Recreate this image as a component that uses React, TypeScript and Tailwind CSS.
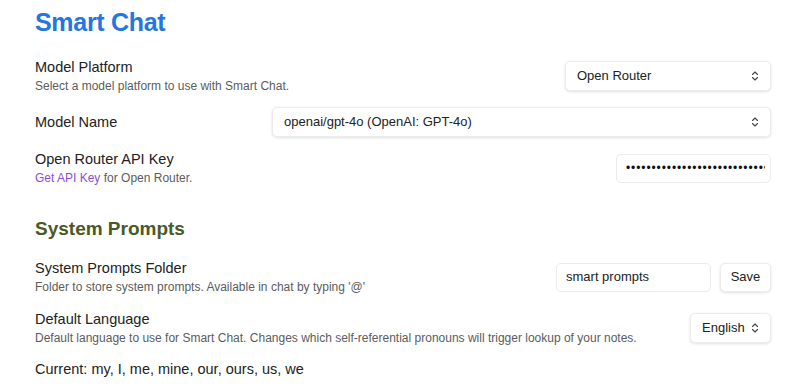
const FONT = "font-['Liberation_Sans','Noto_Sans',sans-serif]";

function Chevrons() {
  return (
    <svg width="10" height="12" viewBox="0 0 10 12" fill="none" className="shrink-0">
      <path d="M2.5 4.5 5 2l2.5 2.5M2.5 7.5 5 10l2.5-2.5" stroke="#444" strokeWidth="1.1" strokeLinecap="round" strokeLinejoin="round" />
    </svg>
  );
}

function Select({ value, className }: { value: string; className: string }) {
  return (
    <div
      className={`h-[30px] flex items-center justify-between pl-[11px] pr-[10px] rounded-[5px] bg-white border border-[#ececec] shadow-[0_1px_3px_rgba(0,0,0,0.12)] text-[13px] text-[#222] ${className}`}
    >
      <span>{value}</span>
      <Chevrons />
    </div>
  );
}

function Setting({
  name,
  desc,
  children,
}: {
  name: string;
  desc?: React.ReactNode;
  children: React.ReactNode;
}) {
  return (
    <div className="flex items-center justify-between gap-4 min-h-[36px]">
      <div className="flex flex-col gap-[3px] shrink-0">
        <div className="text-[14.5px] leading-[18px] text-[#222]">{name}</div>
        {desc && <div className="text-[12px] leading-[15px] text-[#5c5c5c]">{desc}</div>}
      </div>
      {children}
    </div>
  );
}

export default function App() {
  return (
    <div className={`w-[805px] h-[392px] bg-white overflow-hidden pl-[35px] pr-[34px] ${FONT}`}>
      <h1 className="text-[25px] font-bold text-[#2476e0] leading-[32px] tracking-[-0.3px] pt-[6px] mb-[20px]">Smart Chat</h1>

      <div className="flex flex-col gap-[10px]">
        <Setting name="Model Platform" desc="Select a model platform to use with Smart Chat.">
          <Select value="Open Router" className="w-[206px]" />
        </Setting>
        <Setting name="Model Name">
          <Select value="openai/gpt-4o (OpenAI: GPT-4o)" className="w-[499px]" />
        </Setting>
        <Setting
          name="Open Router API Key"
          desc={
            <>
              <span className="text-[#8b4fd6]">Get API Key</span> for Open Router.
            </>
          }
        >
          <div className="w-[155px] h-[29px] flex items-center pl-[9px] pr-[5px] rounded-[5px] border border-[#ececec]">
            <span className="flex-1 overflow-hidden whitespace-nowrap text-[#111] text-[12px] tracking-[0.9px]">
              ••••••••••••••••••••••••••••
            </span>
          </div>
        </Setting>
      </div>

      <h2 className="text-[19px] font-bold text-[#4a5a26] leading-[26px] mt-[30px] mb-[17px]">System Prompts</h2>

      <div className="flex flex-col gap-[15px]">
        <Setting name="System Prompts Folder" desc="Folder to store system prompts. Available in chat by typing '@'">
          <div className="flex items-center gap-[9px]">
            <div className="w-[155px] h-[29px] flex items-center pl-[9px] rounded-[5px] border border-[#ececec] text-[13px] text-[#222]">
              smart prompts
            </div>
            <button className="w-[51px] h-[29px] rounded-[5px] bg-white border border-[#ececec] shadow-[0_1px_3px_rgba(0,0,0,0.12)] text-[13px] text-[#222]">
              Save
            </button>
          </div>
        </Setting>
        <Setting
          name="Default Language"
          desc="Default language to use for Smart Chat. Changes which self-referential pronouns will trigger lookup of your notes."
        >
          <Select value="English" className="w-[81px]" />
        </Setting>
      </div>

      <div className="text-[14.5px] text-[#222] mt-[13px]">Current: my, I, me, mine, our, ours, us, we</div>
    </div>
  );
}
